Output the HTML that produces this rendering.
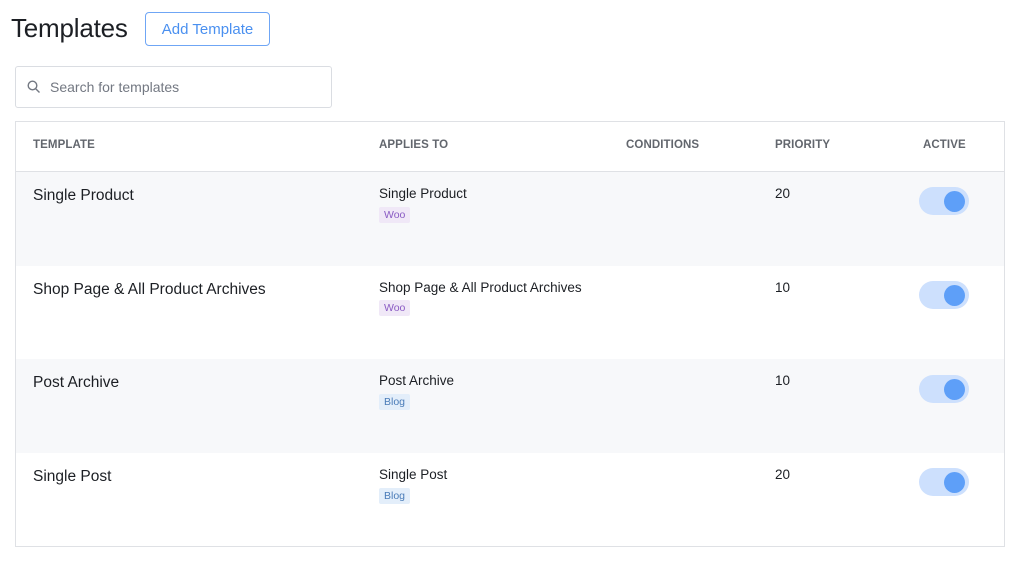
<!DOCTYPE html>
<html><head><style>
body{margin:0;width:1024px;height:566px;background:#fff;font-family:"Liberation Sans",sans-serif;color:#1f2329;position:relative;overflow:hidden}
.a{position:absolute}
h1{position:absolute;left:11px;top:13px;margin:0;font-weight:normal;font-size:26px;color:#1c1f24;letter-spacing:-0.2px}
.btn{left:145px;top:12px;width:123px;height:32px;border:1px solid #6fa6f5;border-radius:4px;color:#4a90f0;font-size:15px;text-align:center;line-height:33px}
.search{left:15px;top:66px;width:315px;height:40px;border:1px solid #dadde2;border-radius:3px}
.search span{position:absolute;left:34px;top:12px;font-size:14px;color:#737882}
.tbl{left:15px;top:121px;width:988px;height:424px;border:1px solid #dfe1e5}
.hd{font-size:11.5px;font-weight:bold;color:#62666d;top:139px;letter-spacing:0.1px}
.row{left:16px;width:988px;height:94px}
.t{font-size:15.5px;color:#1c1f24}
.s{font-size:13.5px;color:#1c1f24}
.tag{font-size:10.5px;padding:2px 5px;border-radius:2px}
.woo{background:#f0e8f7;color:#8a5bc4}
.blog{background:#e3eefa;color:#4a7cb8}
.tg{left:919px;width:50px;height:28px;border-radius:14px;background:#cde0fd}
.tg:after{content:"";position:absolute;left:25px;top:4px;width:21px;height:21px;border-radius:50%;background:#5e9ff8}
</style></head><body>
<h1>Templates</h1>
<div class="a btn">Add Template</div>
<div class="a search"><svg class="a" style="left:11px;top:13px" width="14" height="14" viewBox="0 0 14 14"><circle cx="5.5" cy="5.5" r="4.3" fill="none" stroke="#737882" stroke-width="1.4"/><path d="M8.7 8.7L12.5 12.5" stroke="#737882" stroke-width="1.4"/></svg><span>Search for templates</span></div>
<div class="a tbl"></div>
<div class="a" style="left:16px;top:171px;width:988px;height:1px;background:#dfe1e5"></div>
<div class="a hd" style="left:33px">TEMPLATE</div>
<div class="a hd" style="left:379px">APPLIES TO</div>
<div class="a hd" style="left:626px">CONDITIONS</div>
<div class="a hd" style="left:775px">PRIORITY</div>
<div class="a hd" style="left:923px">ACTIVE</div>

<div class="a row" style="top:172px;background:#f7f8fa"></div>
<div class="a row" style="top:359px;background:#f7f8fa"></div>

<div class="a t" style="left:33px;top:187px">Single Product</div>
<div class="a s" style="left:379px;top:186px">Single Product</div>
<div class="a tag woo" style="left:379px;top:207px">Woo</div>
<div class="a s" style="left:775px;top:186px">20</div>
<div class="a tg" style="top:187px"></div>

<div class="a t" style="left:33px;top:281px">Shop Page &amp; All Product Archives</div>
<div class="a s" style="left:379px;top:280px">Shop Page &amp; All Product Archives</div>
<div class="a tag woo" style="left:379px;top:300px">Woo</div>
<div class="a s" style="left:775px;top:280px">10</div>
<div class="a tg" style="top:281px"></div>

<div class="a t" style="left:33px;top:374px">Post Archive</div>
<div class="a s" style="left:379px;top:373px">Post Archive</div>
<div class="a tag blog" style="left:379px;top:394px">Blog</div>
<div class="a s" style="left:775px;top:373px">10</div>
<div class="a tg" style="top:375px"></div>

<div class="a t" style="left:33px;top:468px">Single Post</div>
<div class="a s" style="left:379px;top:467px">Single Post</div>
<div class="a tag blog" style="left:379px;top:488px">Blog</div>
<div class="a s" style="left:775px;top:467px">20</div>
<div class="a tg" style="top:468px"></div>
</body></html>
